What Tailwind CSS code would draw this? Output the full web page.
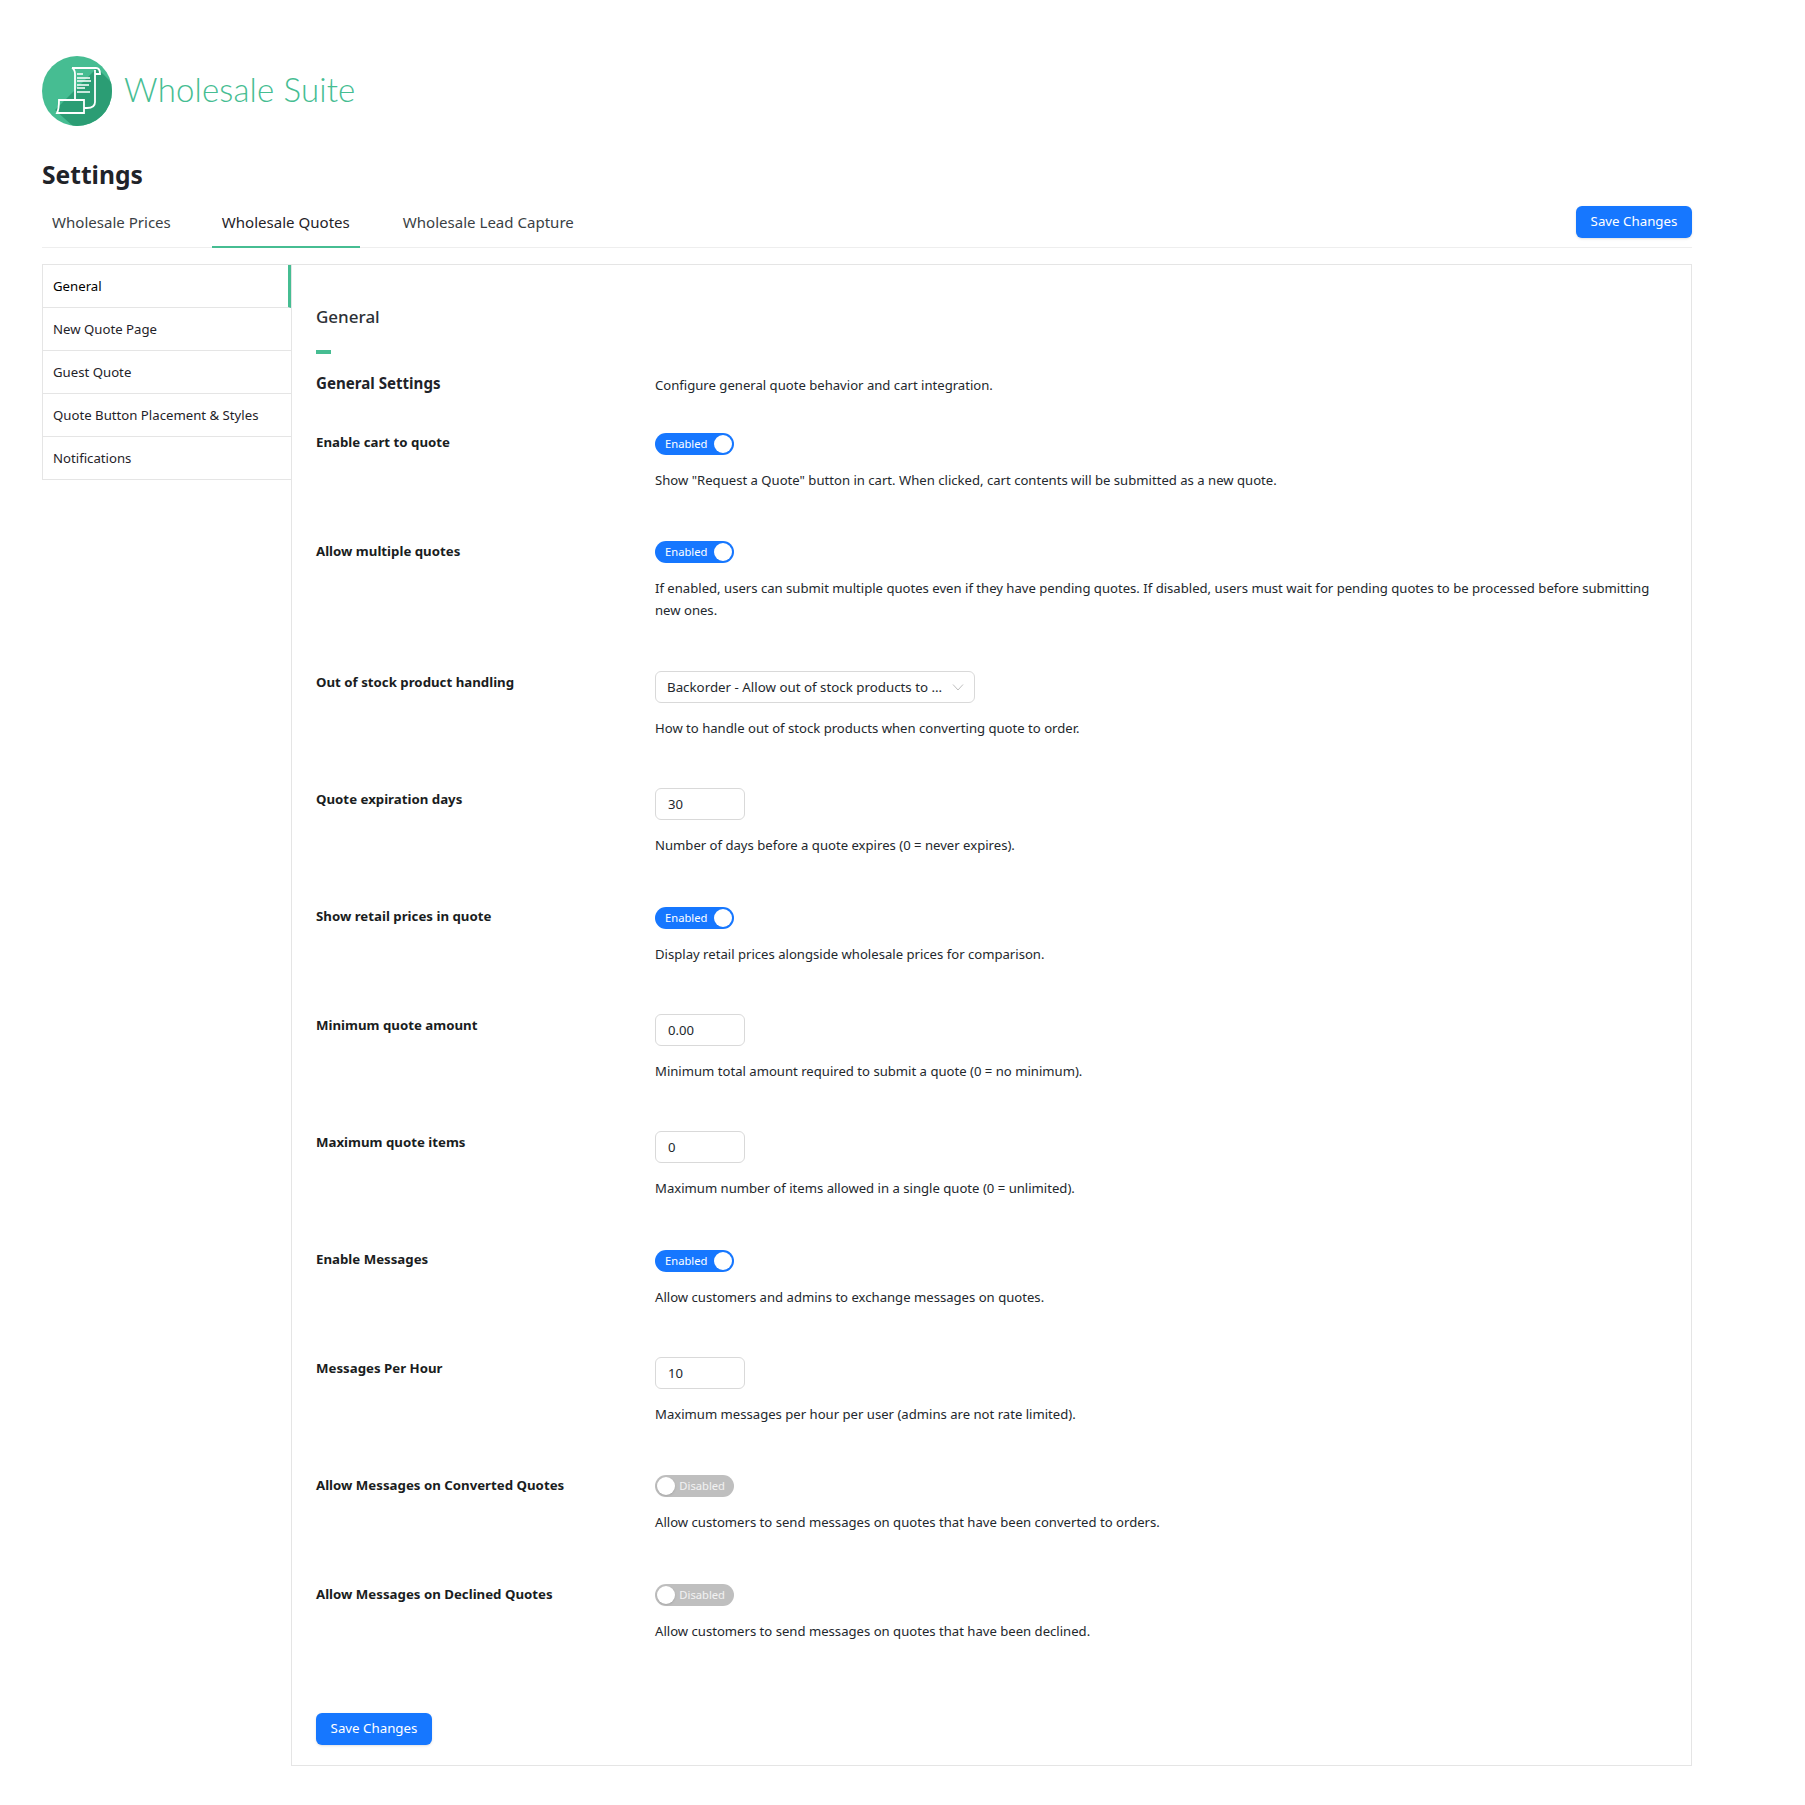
<!DOCTYPE html>
<html lang="en">
<head>
    <meta charset="UTF-8" />
    <title>Settings</title>
    <script src="https://cdn.jsdelivr.net/npm/@tailwindcss/browser@4"></script>
</head>
<body class="bg-white text-[#1f2329] font-['Noto_Sans',sans-serif]">
<div class="w-[1650px] ml-[42px] pt-[56px]">

    <!-- logo -->
    <div class="flex items-center h-[70px]">
        <svg width="70" height="70" viewBox="0 0 70 70">
            <defs>
                <clipPath id="disc"><circle cx="35" cy="35" r="35" /></clipPath>
            </defs>
            <circle cx="35" cy="35" r="35" fill="#46bd92" />
            <path clip-path="url(#disc)" d="M55 12 L80 37 L80 80 L42 80 L13 54 Z" fill="#2b9d74" />
            <path d="M30 12 H54 C57 12 58 15 58 18 H53 M30 12 C32 13 33 15 33 18 V44 M53 14 V46 C53 50 50 52 45 52 H42 M17 44 H42 V57 H15 C17 53 17 48 17 44 Z" fill="none" stroke="#fff" stroke-width="1.8" />
            <path d="M35 18 H41 M35 22 H48 M35 25 H49 M35 29 H47 M35 32 H43 M35 36 H48" fill="none" stroke="#fff" stroke-width="1.4" />
        </svg>
        <span class="ml-[12px] mb-[4px] text-[33px] leading-none font-light text-[#46bd92] font-['Lato',sans-serif] tracking-[0.15px]">Wholesale Suite</span>
    </div>

    <h1 class="mt-[33px] text-[24.6px] leading-[32px] font-bold text-[#1f2329]">Settings</h1>

    <!-- tabs -->
    <div class="mt-[15px] flex justify-between items-start h-[42px] border-b border-[#eeeeee]">
        <div class="flex text-[15.05px] text-[#3a3f45]">
            <a class="h-[42px] px-[10px] leading-[32px] mr-[31px]">Wholesale Prices</a>
            <a class="h-[42px] px-[10px] leading-[32px] mr-[33px] text-[#1f2329] border-b-2 border-[#46bd92]">Wholesale Quotes</a>
            <a class="h-[42px] px-[10px] leading-[32px]">Wholesale Lead Capture</a>
        </div>
        <button class="w-[116px] h-[32px] rounded-[6px] bg-[#1677ff] text-white text-[13.3px] shadow-sm">Save Changes</button>
    </div>

    <div class="mt-[16px] flex items-stretch">
        <!-- side menu -->
        <ul class="w-[249px] self-start border-l border-t border-[#e5e5e5] text-[13.2px] text-[#1f2329]">
            <li class="h-[43px] pl-[10px] leading-[42px] border-b border-[#e5e5e5] text-black border-r-[3px] border-r-[#46bd92]">General</li>
            <li class="h-[43px] pl-[10px] leading-[42px] border-b border-[#e5e5e5]">New Quote Page</li>
            <li class="h-[43px] pl-[10px] leading-[42px] border-b border-[#e5e5e5]">Guest Quote</li>
            <li class="h-[43px] pl-[10px] leading-[42px] border-b border-[#e5e5e5]">Quote Button Placement &amp; Styles</li>
            <li class="h-[43px] pl-[10px] leading-[42px] border-b border-[#e5e5e5]">Notifications</li>
        </ul>

        <!-- panel -->
        <div class="w-[1401px] h-[1502px] border border-[#e5e5e5] pl-[24px] pt-[40px]">
            <h2 class="text-[17px] leading-[24px] font-medium text-[#2c3036]">General</h2>
            <div class="mt-[21px] w-[15px] h-[4px] bg-[#46bd92]"></div>

            <div class="mt-[18px] flex text-[13.12px] leading-[22px]">
                <div class="w-[339px] text-[15.1px] font-bold text-[#1f2329]">General Settings</div>
                <div class="pt-[2px] text-[#23282d]">Configure general quote behavior and cart integration.</div>
            </div>

            <div class="mt-[35px] flex flex-col text-[13.12px] leading-[22px] text-[#23282d]">
                <div class="flex h-[109px]">
                    <label class="w-[339px] text-[13.25px] font-bold text-[#1a1d21] leading-[20px] pt-[1px]">Enable cart to quote</label>
                    <div class="pt-[2px]">
                        <span class="flex items-center justify-between w-[79px] h-[22px] rounded-full bg-[#1677ff] pl-[10px] pr-[2px] text-white text-[11.2px]">Enabled<i class="block w-[18px] h-[18px] rounded-full bg-white"></i></span>
                        <p class="mt-[14px]">Show "Request a Quote" button in cart. When clicked, cart contents will be submitted as a new quote.</p>
                    </div>
                </div>
                <div class="flex h-[131px]">
                    <label class="w-[339px] text-[13.25px] font-bold text-[#1a1d21] leading-[20px] pt-[1px]">Allow multiple quotes</label>
                    <div class="pt-[1px]">
                        <span class="flex items-center justify-between w-[79px] h-[22px] rounded-full bg-[#1677ff] pl-[10px] pr-[2px] text-white text-[11.2px]">Enabled<i class="block w-[18px] h-[18px] rounded-full bg-white"></i></span>
                        <p class="mt-[14px] w-[1010px]">If enabled, users can submit multiple quotes even if they have pending quotes. If disabled, users must wait for pending quotes to be processed before submitting new ones.</p>
                    </div>
                </div>
                <div class="flex h-[117px]">
                    <label class="w-[339px] text-[13.25px] font-bold text-[#1a1d21] leading-[20px] pt-[1px]">Out of stock product handling</label>
                    <div>
                        <div class="flex items-center justify-between w-[320px] h-[32px] rounded-[6px] border border-[#d9d9d9] pl-[11px] pr-[10px]">
                            <span class="text-[13.32px]">Backorder - Allow out of stock products to ...</span>
                            <svg width="12" height="12" viewBox="0 0 12 12"><path d="M1 3.5 L6 9 L11 3.5" fill="none" stroke="#bfbfbf" stroke-width="1" /></svg>
                        </div>
                        <p class="mt-[14px]">How to handle out of stock products when converting quote to order.</p>
                    </div>
                </div>
                <div class="flex h-[117px]">
                    <label class="w-[339px] text-[13.25px] font-bold text-[#1a1d21] leading-[20px] pt-[1px]">Quote expiration days</label>
                    <div>
                        <div class="w-[90px] h-[32px] rounded-[6px] border border-[#d9d9d9] pl-[12px] leading-[30px]">30</div>
                        <p class="mt-[14px]">Number of days before a quote expires (0 = never expires).</p>
                    </div>
                </div>
                <div class="flex h-[109px]">
                    <label class="w-[339px] text-[13.25px] font-bold text-[#1a1d21] leading-[20px] pt-[1px]">Show retail prices in quote</label>
                    <div class="pt-[2px]">
                        <span class="flex items-center justify-between w-[79px] h-[22px] rounded-full bg-[#1677ff] pl-[10px] pr-[2px] text-white text-[11.2px]">Enabled<i class="block w-[18px] h-[18px] rounded-full bg-white"></i></span>
                        <p class="mt-[14px]">Display retail prices alongside wholesale prices for comparison.</p>
                    </div>
                </div>
                <div class="flex h-[117px]">
                    <label class="w-[339px] text-[13.25px] font-bold text-[#1a1d21] leading-[20px] pt-[1px]">Minimum quote amount</label>
                    <div>
                        <div class="w-[90px] h-[32px] rounded-[6px] border border-[#d9d9d9] pl-[12px] leading-[30px]">0.00</div>
                        <p class="mt-[14px]">Minimum total amount required to submit a quote (0 = no minimum).</p>
                    </div>
                </div>
                <div class="flex h-[117px]">
                    <label class="w-[339px] text-[13.25px] font-bold text-[#1a1d21] leading-[20px] pt-[1px]">Maximum quote items</label>
                    <div>
                        <div class="w-[90px] h-[32px] rounded-[6px] border border-[#d9d9d9] pl-[12px] leading-[30px]">0</div>
                        <p class="mt-[14px]">Maximum number of items allowed in a single quote (0 = unlimited).</p>
                    </div>
                </div>
                <div class="flex h-[109px]">
                    <label class="w-[339px] text-[13.25px] font-bold text-[#1a1d21] leading-[20px] pt-[1px]">Enable Messages</label>
                    <div class="pt-[2px]">
                        <span class="flex items-center justify-between w-[79px] h-[22px] rounded-full bg-[#1677ff] pl-[10px] pr-[2px] text-white text-[11.2px]">Enabled<i class="block w-[18px] h-[18px] rounded-full bg-white"></i></span>
                        <p class="mt-[14px]">Allow customers and admins to exchange messages on quotes.</p>
                    </div>
                </div>
                <div class="flex h-[117px]">
                    <label class="w-[339px] text-[13.25px] font-bold text-[#1a1d21] leading-[20px] pt-[1px]">Messages Per Hour</label>
                    <div>
                        <div class="w-[90px] h-[32px] rounded-[6px] border border-[#d9d9d9] pl-[12px] leading-[30px]">10</div>
                        <p class="mt-[14px]">Maximum messages per hour per user (admins are not rate limited).</p>
                    </div>
                </div>
                <div class="flex h-[109px]">
                    <label class="w-[339px] text-[13.25px] font-bold text-[#1a1d21] leading-[20px] pt-[1px]">Allow Messages on Converted Quotes</label>
                    <div class="pt-[1px]">
                        <span class="flex items-center justify-between w-[79px] h-[22px] rounded-full bg-[#bfbfbf] pl-[2px] pr-[9px] text-white/80 text-[11.2px]"><i class="block w-[18px] h-[18px] rounded-full bg-white shadow"></i>Disabled</span>
                        <p class="mt-[14px]">Allow customers to send messages on quotes that have been converted to orders.</p>
                    </div>
                </div>
                <div class="flex h-[109px]">
                    <label class="w-[339px] text-[13.25px] font-bold text-[#1a1d21] leading-[20px] pt-[1px]">Allow Messages on Declined Quotes</label>
                    <div class="pt-[1px]">
                        <span class="flex items-center justify-between w-[79px] h-[22px] rounded-full bg-[#bfbfbf] pl-[2px] pr-[9px] text-white/80 text-[11.2px]"><i class="block w-[18px] h-[18px] rounded-full bg-white shadow"></i>Disabled</span>
                        <p class="mt-[14px]">Allow customers to send messages on quotes that have been declined.</p>
                    </div>
                </div>
            </div>

            <button class="mt-[21px] w-[116px] h-[32px] rounded-[6px] bg-[#1677ff] text-white text-[13.3px] shadow-sm">Save Changes</button>
        </div>
    </div>
</div>
</body>
</html>
